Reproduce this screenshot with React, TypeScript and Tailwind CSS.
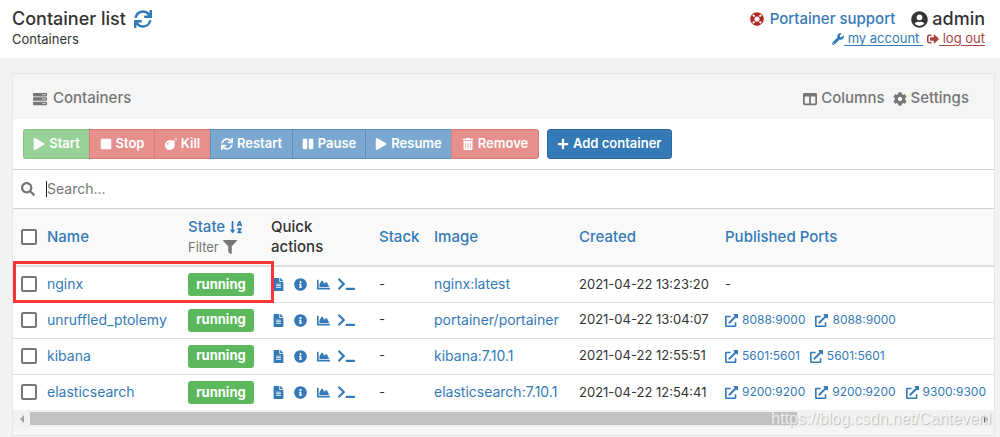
import React from "react";
import {
  FaBomb, FaChartArea, FaCog, FaColumns, FaExternalLinkAlt, FaFileAlt, FaFilter,
  FaInfoCircle, FaLifeRing, FaPause, FaPlay, FaPlus, FaSearch, FaServer,
  FaSignOutAlt, FaSortAlphaDown, FaStop, FaSync, FaTerminal, FaTrashAlt,
  FaUserCircle, FaWrench,
} from "react-icons/fa";

const green = "bg-[#97d297] border-[#84c384]";
const red = "bg-[#e68f8c] border-[#dd7a78]";
const blue = "bg-[#7ba8d0] border-[#5a8fc0]";

const actions = [
  { label: "Start", Icon: FaPlay, tone: green, width: "w-[66px]" },
  { label: "Stop", Icon: FaStop, tone: red, width: "w-[65px]" },
  { label: "Kill", Icon: FaBomb, tone: red, width: "w-[56px]" },
  { label: "Restart", Icon: FaSync, tone: blue, width: "w-[82px]" },
  { label: "Pause", Icon: FaPause, tone: blue, width: "w-[73px]" },
  { label: "Resume", Icon: FaPlay, tone: blue, width: "w-[86px]" },
  { label: "Remove", Icon: FaTrashAlt, tone: red, width: "w-[88px]" },
];

const containers = [
  { name: "nginx", image: "nginx:latest", created: "2021-04-22 13:23:20", ports: [], marked: true },
  { name: "unruffled_ptolemy", image: "portainer/portainer", created: "2021-04-22 13:04:07", ports: ["8088:9000", "8088:9000"] },
  { name: "kibana", image: "kibana:7.10.1", created: "2021-04-22 12:55:51", ports: ["5601:5601", "5601:5601"] },
  { name: "elasticsearch", image: "elasticsearch:7.10.1", created: "2021-04-22 12:54:41", ports: ["9200:9200", "9200:9200", "9300:9300"] },
];

const quickActions = [
  { label: "Logs", Icon: FaFileAlt },
  { label: "Inspect", Icon: FaInfoCircle },
  { label: "Stats", Icon: FaChartArea },
];

function Tick({ label }: { label: string }) {
  return (
    <input
      type="checkbox"
      aria-label={label}
      className="block size-4 appearance-none rounded-xs border-2 border-[#767676] bg-white checked:bg-[#337ab7]"
    />
  );
}

function Header() {
  return (
    <header className="flex h-[58px] items-start justify-between bg-white px-3 pt-[7px]">
      <div>
        <h1 className="flex h-6 items-center gap-2 text-lg font-medium">
          Container list
          <button aria-label="Refresh" className="text-[#337ab7]"><FaSync className="size-[18px]" /></button>
        </h1>
        <div className="text-[13px] leading-4">Containers</div>
      </div>
      <div className="flex flex-col items-end pr-[3px]">
        <div className="flex h-6 items-center gap-4">
          <a href="#support" className="flex items-center gap-1.5 text-[15px] font-medium text-[#337ab7]">
            <FaLifeRing className="size-3.5 text-[#b02a25]" />
            Portainer support
          </a>
          <span className="flex items-center gap-1 text-lg font-medium">
            <FaUserCircle className="size-[17px]" />
            admin
          </span>
        </div>
        <div className="flex h-4 items-center gap-1 text-[13px]">
          <a href="#account" className="flex items-center text-[#337ab7]">
            <FaWrench className="size-3" />
            <span className="whitespace-pre underline underline-offset-2"> my account </span>
          </a>
          <a href="#logout" className="flex items-center text-[#a94442]">
            <FaSignOutAlt className="size-3" />
            <span className="whitespace-pre underline underline-offset-2"> log out</span>
          </a>
        </div>
      </div>
    </header>
  );
}

function Toolbar() {
  return (
    <div className="flex h-[50px] items-start gap-2 bg-white px-2.5 pt-2.5 text-[13px] font-semibold text-white">
      <div className="flex">
        {actions.map(({ label, Icon, tone, width }) => (
          <button
            key={label}
            className={`flex h-[30px] items-center justify-center gap-1 border-y border-l first:rounded-l-[3px] last:rounded-r-[3px] last:border-r ${tone} ${width}`}
          >
            <Icon className="size-3 shrink-0" />
            {label}
          </button>
        ))}
      </div>
      <button className="flex h-[30px] items-center gap-1 rounded-[3px] border border-[#2e6da4] bg-[#337ab7] px-[9px]">
        <FaPlus className="size-3" />
        Add container
      </button>
    </div>
  );
}

function ContainerTable() {
  return (
    <table className="w-full table-fixed border-collapse text-left text-[13px] text-[#333]">
      <colgroup>
        <col className="w-[34px]" />
        <col className="w-[141px]" />
        <col className="w-[83px]" />
        <col className="w-[108px]" />
        <col className="w-[55px]" />
        <col className="w-[145px]" />
        <col className="w-[146px]" />
        <col />
      </colgroup>
      <thead className="bg-[#f9f9f9] text-[15px] leading-5 text-[#337ab7]">
        <tr className="h-[57px] border-b-2 border-[#ddd] *:p-0 *:font-medium">
          <th><div className="pl-2"><Tick label="Select all containers" /></div></th>
          <th><a href="#name">Name</a></th>
          <th>
            <a href="#state" className="flex h-5 items-center gap-1">State <FaSortAlphaDown className="size-3.5" /></a>
            <button className="flex h-5 items-center gap-1 text-[13px] font-normal text-[#767676]">Filter <FaFilter className="size-3.5" /></button>
          </th>
          <th className="text-[#333]">Quick<br />actions</th>
          <th><a href="#stack">Stack</a></th>
          <th><a href="#image">Image</a></th>
          <th><a href="#created">Created</a></th>
          <th><a href="#ports">Published Ports</a></th>
        </tr>
      </thead>
      <tbody>
        {containers.map((c) => (
          <tr key={c.name} className="h-9 border-b border-[#ddd] whitespace-nowrap *:p-0 last:border-b-0">
            <td className="relative">
              <div className="pl-2"><Tick label={`Select ${c.name}`} /></div>
              {c.marked && <div className="pointer-events-none absolute -top-1.5 left-0 h-[42px] w-[261px] border-3 border-[#fb3538]" />}
            </td>
            <td><a href={`#${c.name}`} className="text-sm text-[#337ab7]">{c.name}</a></td>
            <td><span className="flex h-[23px] w-[66px] items-center justify-center rounded-[3px] bg-[#5cb85c] font-bold text-white">running</span></td>
            <td>
              <div className="flex items-center text-[#337ab7]">
                {quickActions.map(({ label, Icon }) => (
                  <a key={label} href={`#${label}`} aria-label={label} className="flex w-[23px] pl-0.5 first:w-[21px] first:pl-px"><Icon className="size-[13px]" /></a>
                ))}
                <a href="#Console" aria-label="Console"><FaTerminal className="h-4 w-[17px]" /></a>
              </div>
            </td>
            <td>-</td>
            <td><a href={`#${c.image}`} className="text-sm text-[#337ab7]">{c.image}</a></td>
            <td>{c.created}</td>
            <td>
              {c.ports.length === 0 ? "-" : (
                <div className="flex gap-2.5 text-xs text-[#337ab7]">
                  {c.ports.map((p, i) => (
                    <a key={i} href={`#${p}`} className="flex items-center gap-1"><FaExternalLinkAlt className="size-[13px]" />{p}</a>
                  ))}
                </div>
              )}
            </td>
          </tr>
        ))}
      </tbody>
    </table>
  );
}

export default function App() {
  return (
    <div className="min-h-screen bg-[#f2f2f2] font-['Inter',sans-serif] text-[#333]">
      <Header />
      <main className="pt-[15px] pr-[5px] pl-3">
        <section className="border border-[#e6e6e6] bg-[#f5f5f5]">
          <div className="flex h-[45px] items-center justify-between pt-1 pr-[25px] pl-5 text-[15px] font-medium text-[#767676]">
            <h2 className="flex items-center gap-1.5"><FaServer className="size-3.5" />Containers</h2>
            <div className="flex gap-2">
              <button className="flex items-center gap-1"><FaColumns className="size-3.5" />Columns</button>
              <button className="flex items-center gap-1"><FaCog className="size-3.5" />Settings</button>
            </div>
          </div>
          <Toolbar />
          <label className="flex h-10 items-center border-y border-[#d2d2d2] bg-white pl-2 text-[#767676]">
            <FaSearch className="size-3.5" />
            <span className="ml-[11px] h-4 w-px bg-[#222]" />
            <input type="text" placeholder="Search..." aria-label="Search" className="flex-1 bg-transparent text-sm outline-none placeholder:text-[#767676]" />
          </label>
          <div className="bg-white"><ContainerTable /></div>
          <div className="relative flex h-[17px] items-center bg-[#f1f1f1]">
            <span className="flex w-[17px] justify-center"><span className="border-y-4 border-r-4 border-y-transparent border-r-[#a3a3a3]" /></span>
            <div className="h-[13px] flex-1"><div className="h-full w-[81%] bg-[#c1c1c1]" /></div>
            <span className="flex w-[17px] justify-center"><span className="border-y-4 border-l-4 border-y-transparent border-l-[#505050]" /></span>
            <span className="absolute right-[3px] font-['Liberation_Sans',sans-serif] text-base leading-4 text-white/70 [text-shadow:1px_1px_1px_#bbb]">https://blog.csdn.net/Cantevenl</span>
          </div>
          <div className="h-2" />
        </section>
      </main>
    </div>
  );
}
